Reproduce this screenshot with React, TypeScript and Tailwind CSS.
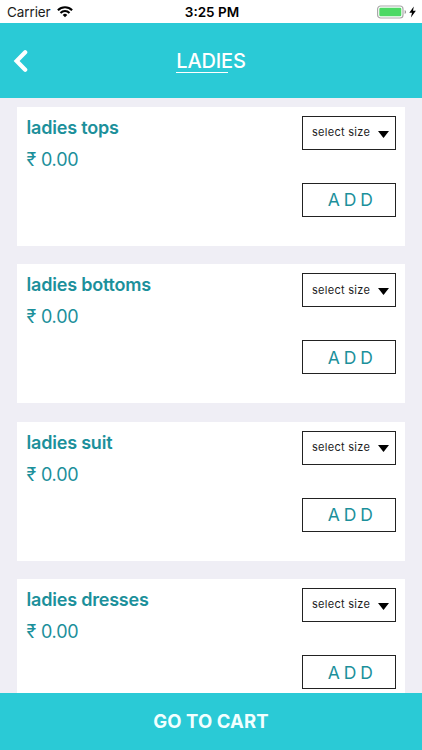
const products = [
  { name: "ladies tops", price: "0.00" },
  { name: "ladies bottoms", price: "0.00" },
  { name: "ladies suit", price: "0.00" },
  { name: "ladies dresses", price: "0.00" },
];

function StatusBar() {
  return (
    <div className="grid h-[23px] shrink-0 grid-cols-3 items-center bg-white pl-[7px] pr-[5px] text-[13.5px] text-[#1c1c1c]">
      <div className="flex items-center gap-[6px] pt-px">
        <span className="tracking-[-0.1px]">Carrier</span>
        <svg className="h-[12px] w-[16px]" viewBox="0 0 16 12" fill="none" stroke="#000" strokeWidth="2.1">
          <path d="M0.9 4.2a10.2 10.2 0 0 1 14.2 0" />
          <path d="M3.5 6.9a6.4 6.4 0 0 1 9 0" />
          <path d="M8 11.3 5.7 8.9a3.3 3.3 0 0 1 4.6 0z" fill="#000" stroke="none" />
        </svg>
      </div>
      <span className="pt-px text-center font-semibold text-black">3:25 PM</span>
      <div className="flex items-center justify-end">
        <svg className="h-[14px] w-[41px]" viewBox="0 0 41 14">
          <rect x="1.6" y="1" width="25.4" height="12" rx="3" fill="#fff" stroke="#a9a9a9" strokeWidth="1.2" />
          <rect x="3.3" y="2.7" width="22" height="8.6" rx="1.2" fill="#4cd964" />
          <path d="M28.7 5c1.7.6 1.7 3.4 0 4z" fill="#8c8c8c" />
          <path d="M37.8 1.5 33.3 7.7h2.7L34.9 12.4l5-6.6H37z" fill="#000" />
        </svg>
      </div>
    </div>
  );
}

function Header() {
  return (
    <header className="grid h-[75px] shrink-0 grid-cols-[60px_1fr_60px] items-center bg-[#2acad6]">
      <button className="pl-[13px]" aria-label="Back">
        <svg className="h-[24px] w-[15px]" viewBox="0 0 15 24" fill="none" stroke="#fff" strokeWidth="4.2" strokeLinecap="round" strokeLinejoin="miter">
          <path d="M12.2 3.2 3.6 12l8.6 8.8" />
        </svg>
      </button>
      <div className="flex justify-center">
        <h1 className="relative text-[20px] font-medium leading-6 tracking-[-0.15px] text-white">
          LADIES
          <span className="absolute bottom-0 left-0 h-px w-[52px] bg-white" />
        </h1>
      </div>
    </header>
  );
}

function ProductCard({ name, price }: { name: string; price: string }) {
  return (
    <article className="flex h-[139px] shrink-0 justify-between bg-white pl-[9.5px] pr-[9px] pt-[9px] text-[#1c909b]">
      <div>
        <h2 className="text-[18px] font-semibold leading-6 tracking-[-0.2px]">{name}</h2>
        <p className="mt-[8px] text-[18px] leading-6 tracking-[-0.2px]">₹ {price}</p>
      </div>
      <div className="flex w-[94px] flex-col gap-[33px]">
        <button className="flex h-[34px] items-center justify-between border border-[#222] pl-[9px] pr-[6px] text-[11px] tracking-[0.28px] text-[#1c1c1c]">
          <span className="whitespace-nowrap pb-px">select size</span>
          <svg className="mt-[2px] h-[7px] w-[11px]" viewBox="0 0 11 7">
            <path d="M0 0h11L5.5 7z" fill="#000" />
          </svg>
        </button>
        <button className="h-[34px] border border-[#222] pl-[2px] pt-px text-[17.5px] tracking-[-0.5px]">A D D</button>
      </div>
    </article>
  );
}

export default function App() {
  return (
    <div className="flex h-[750px] w-[422px] flex-col overflow-hidden bg-[#efeef5] font-['Inter','Noto_Sans',sans-serif]">
      <StatusBar />
      <Header />
      <main className="flex min-h-0 flex-1 flex-col gap-[18.4px] overflow-hidden px-[17px] pt-[9px]">
        {products.map((product) => (
          <ProductCard key={product.name} name={product.name} price={product.price} />
        ))}
      </main>
      <button className="h-[57px] shrink-0 bg-[#2acad6] text-[18.5px] font-bold tracking-[0.1px] text-[#f2ffff]">GO TO CART</button>
    </div>
  );
}
